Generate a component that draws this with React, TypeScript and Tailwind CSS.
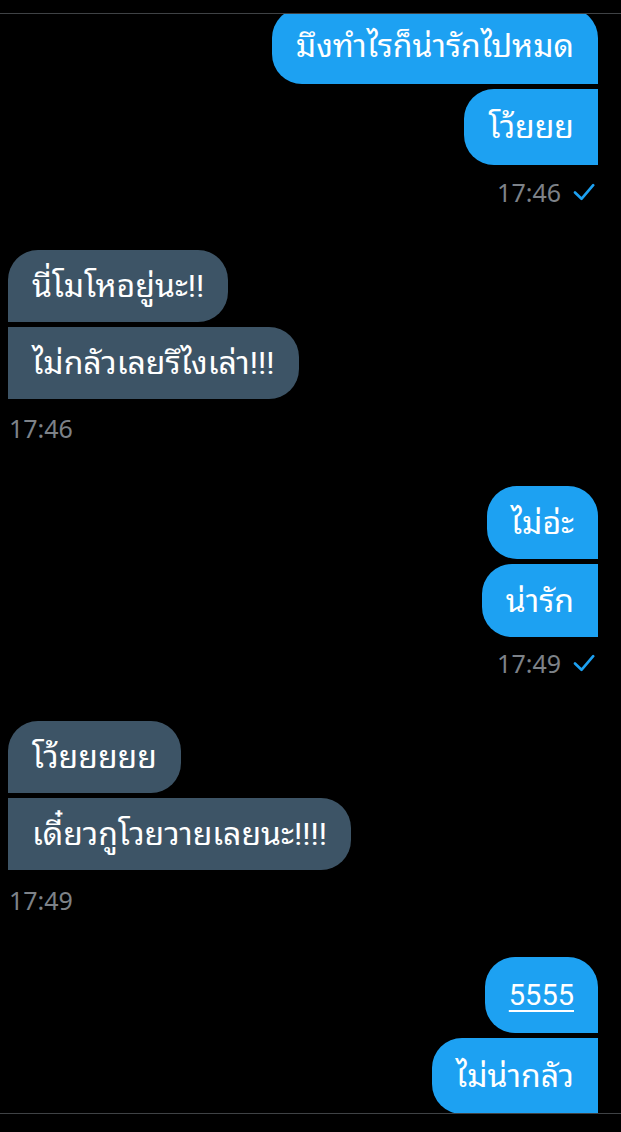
import React from 'react';

type Msg = { text: string; link?: boolean };
type Group = { side: 'me' | 'them'; time: string; h: string; timeGap: string; after: string; msgs: Msg[] };

const groups: Group[] = [
  { side: 'me', time: '17:46', h: 'h-[76px]', timeGap: 'mt-[15px]', after: 'mb-[46px]', msgs: [{ text: 'มึงทำไรก็น่ารักไปหมด' }, { text: 'โว้ยยย' }] },
  { side: 'them', time: '17:46', h: 'h-[72px]', timeGap: 'mt-[17px]', after: 'mb-[46px]', msgs: [{ text: 'นี่โมโหอยู่นะ!!' }, { text: 'ไม่กลัวเลยรึไงเล่า!!!' }] },
  { side: 'me', time: '17:49', h: 'h-[73px]', timeGap: 'mt-[14px]', after: 'mb-[46px]', msgs: [{ text: 'ไม่อ่ะ' }, { text: 'น่ารัก' }] },
  { side: 'them', time: '17:49', h: 'h-[72px]', timeGap: 'mt-[18px]', after: 'mb-[45px]', msgs: [{ text: 'โว้ยยยยย' }, { text: 'เดี๋ยวกูโวยวายเลยนะ!!!!' }] },
  { side: 'me', time: '', h: 'h-[76px]', timeGap: '', after: '', msgs: [{ text: '5555', link: true }, { text: 'ไม่น่ากลัว' }] },
];

const Check = () => (
  <svg width="22" height="18" viewBox="0 0 22 18" fill="none" className="ml-[12px]">
    <path d="M2 9.5 L8.5 15.8 L20.2 2.2" stroke="#1da1f2" strokeWidth="2.6" strokeLinecap="round" strokeLinejoin="round" />
  </svg>
);

const Bubble: React.FC<{ msg: Msg; me: boolean; first: boolean; cls: string; h: string }> = ({ msg, me, first, cls, h }) => {
  const shape = me
    ? first
      ? 'rounded-[30px] rounded-br-none'
      : 'rounded-l-[30px]'
    : first
      ? 'rounded-[30px] rounded-bl-none'
      : 'rounded-r-[30px]';
  return (
    <div
      className={`${cls} ${h} ${shape} flex items-center px-[24px] leading-[36px] text-white ${msg.link ? 'text-[29px]' : 'text-[32px]'} ${me ? 'bg-[#1da1f2]' : 'bg-[#3d5466]'}`}
    >
      <span className={msg.link ? 'underline decoration-[1.5px] underline-offset-[5px]' : ''}>{msg.text}</span>
    </div>
  );
};

export default function App() {
  return (
    <div
      className="flex h-screen w-full flex-col bg-black"
      style={{ fontFamily: 'Roboto, "Noto Sans Thai Looped", "Noto Sans Thai", "Noto Sans", sans-serif' }}
    >
      <div className="h-[14px] shrink-0 border-b border-[#3f4245]" />
      <div className="flex-1 overflow-hidden border-b border-[#3f4245]">
        <div className="-mt-[6px] flex flex-col">
          {groups.map((g, gi) => {
            const me = g.side === 'me';
            return (
              <div key={gi} className={`flex flex-col ${me ? 'items-end pr-[23px]' : 'items-start pl-[8px]'} ${g.after}`}>
                {g.msgs.map((m, mi) => (
                  <Bubble key={mi} msg={m} me={me} first={mi === 0} cls={mi > 0 ? 'mt-[5px]' : ''} h={g.h} />
                ))}
                {g.time && (
                  <div
                    className={`${g.timeGap} flex h-[24px] items-center text-[25px] leading-[24px] text-[#7d8288] ${me ? 'pr-[3px]' : 'pl-[1px]'}`}
                    style={{ fontFamily: '"Noto Sans", "Open Sans", sans-serif' }}
                  >
                    <span>{g.time}</span>
                    {me && <Check />}
                  </div>
                )}
              </div>
            );
          })}
        </div>
      </div>
      <div className="h-[18px] shrink-0" />
    </div>
  );
}
